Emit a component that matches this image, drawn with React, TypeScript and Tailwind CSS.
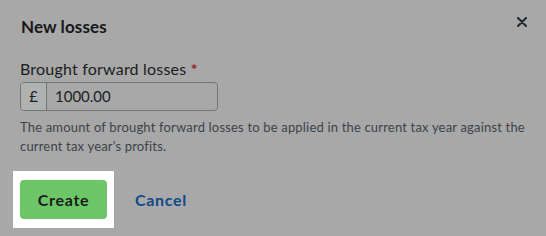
import React from "react";

export default function App() {
  return (
    <div
      className="w-[546px] h-[236px] bg-[#a8a8a8] overflow-hidden relative"
      style={{ fontFamily: "Lato, 'Open Sans', sans-serif" }}
    >
      <div className="flex items-start justify-between pl-[21px] pr-[19px] pt-[17px]">
        <h2 className="text-[17px] leading-[20px] font-bold text-[#161819] tracking-[0.1px]">New losses</h2>
        <button className="mt-[0px] text-[#22272b]">
          <svg width="10" height="10" viewBox="0 0 10 10" className="block">
            <path d="M1 1 L9 9 M9 1 L1 9" stroke="currentColor" strokeWidth="2" strokeLinecap="round" />
          </svg>
        </button>
      </div>

      <div className="pl-[20px] pt-[23px]">
        <label className="block text-[16px] leading-[18px] text-[#1b1d1f] tracking-[0.2px]">
          Brought forward losses <span className="text-[#9b1b22] font-bold">*</span>
        </label>
        <div className="mt-[4px] flex w-[198px] h-[29px] rounded-[4px] border border-[#70767b] overflow-hidden">
          <div className="w-[26px] flex items-center justify-center bg-[#b0b1b1] border-r border-[#70767b] text-[15px] text-[#1b1d1f]">
            £
          </div>
          <div className="flex-1 flex items-center pl-[8px] text-[15px] text-[#1b1d1f]">1000.00</div>
        </div>
        <p className="mt-[7px] text-[13px] leading-[19px] text-[#3d4348] w-[520px] tracking-[0.18px]">
          The amount of brought forward losses to be applied in the current tax year against the
          current tax year's profits.
        </p>
        <div className="mt-[15px] flex items-center">
          <div className="-ml-[7px] bg-white px-[7px] py-[9px]">
            <button className="w-[87px] h-[39px] rounded-[4px] bg-[#6cc566] text-[16px] font-bold text-[#1a1c1c] tracking-[0.7px]">
              Create
            </button>
          </div>
          <button className="ml-[21px] text-[16px] font-bold text-[#0f4a87] tracking-[0.7px]">Cancel</button>
        </div>
      </div>
    </div>
  );
}
